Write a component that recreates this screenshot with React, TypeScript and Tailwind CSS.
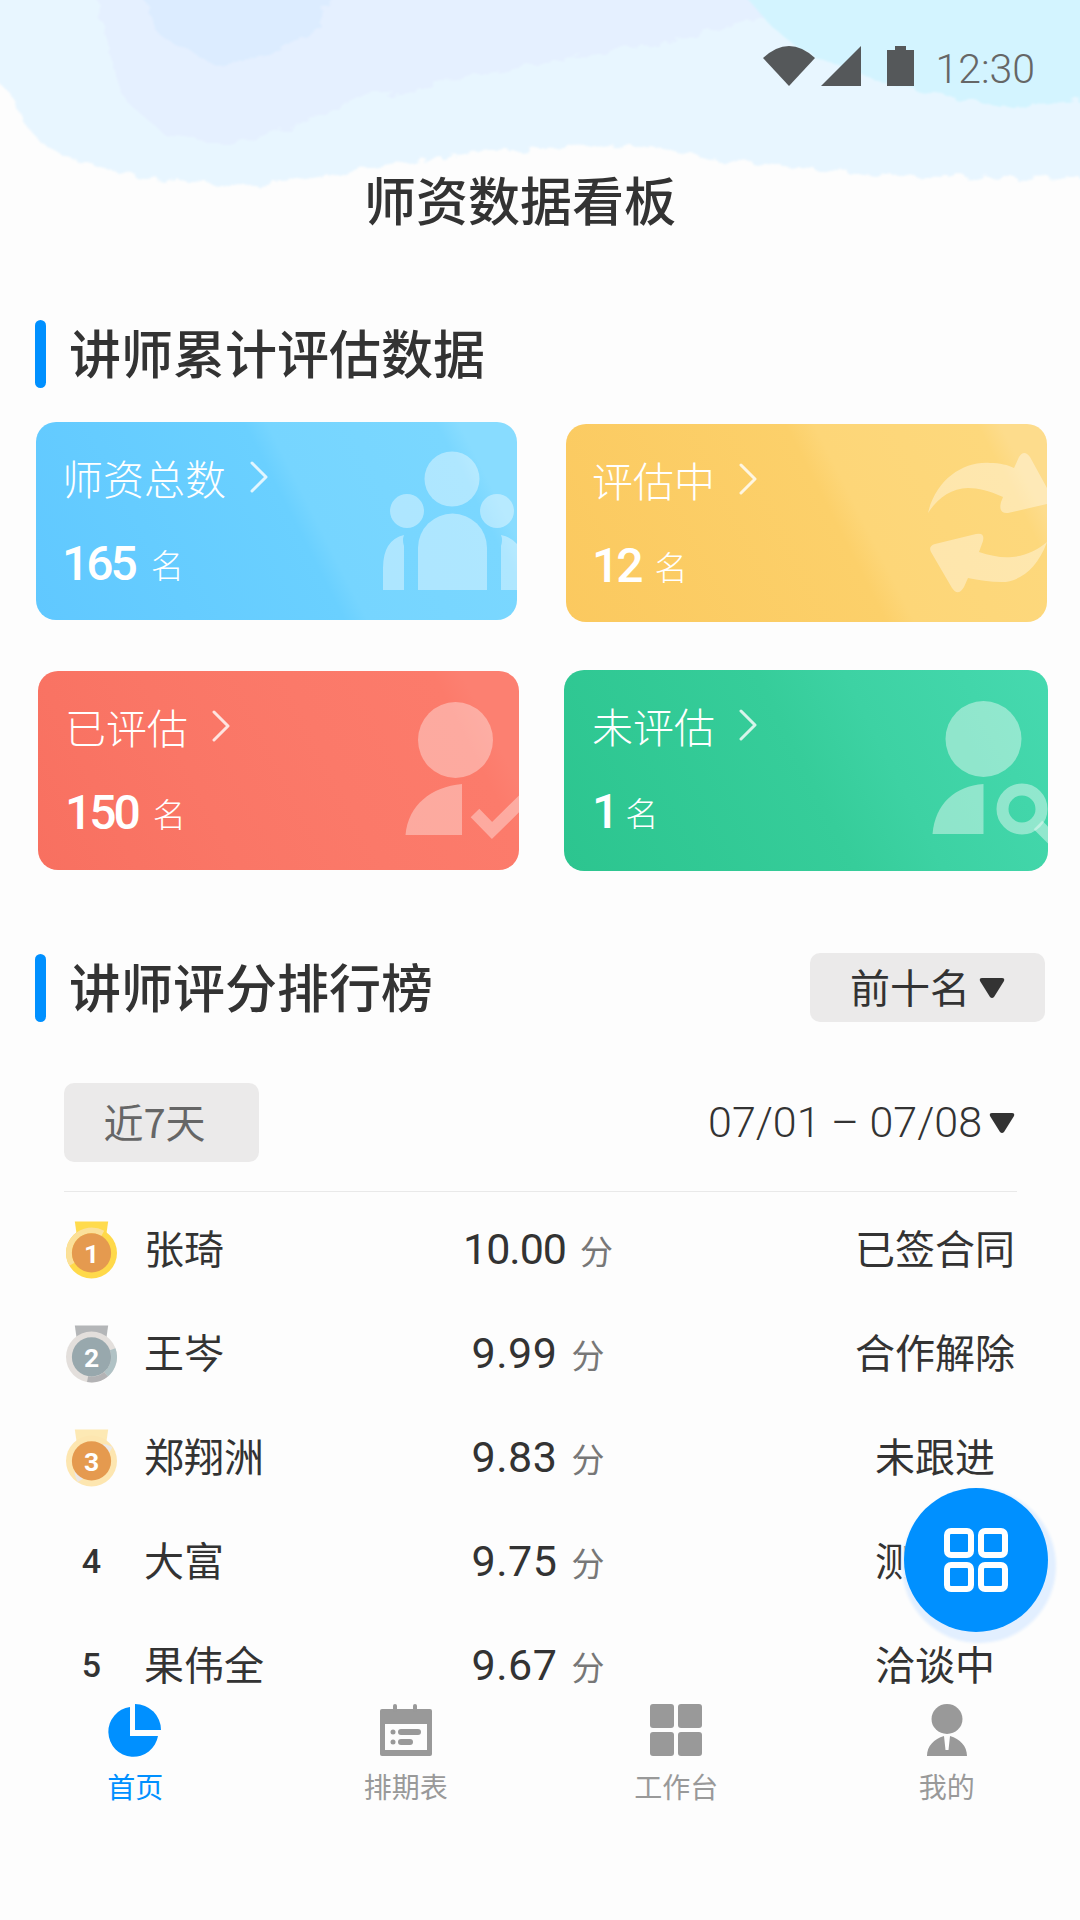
import React from "react";

const cjk = "font-['Noto_Sans_CJK_SC',sans-serif]";
const num = "font-['Roboto','Noto_Sans_CJK_SC',sans-serif]";

const Chevron = ({ className }: { className: string }) => (
  <svg width="18" height="32" viewBox="0 0 18 32" className={className}>
    <polyline points="2,2 16,16 2,30" fill="none" stroke="#ffffff" strokeOpacity="0.8" strokeWidth="3" strokeLinecap="round" strokeLinejoin="round" />
  </svg>
);

const Caret = ({ className }: { className: string }) => (
  <svg width="26" height="22" viewBox="0 0 26 22" className={className}>
    <path d="M3 1 H23 Q26 1 25 4 L15 20 Q13 22 11 20 L1 4 Q0 1 3 1 Z" fill="#333333" />
  </svg>
);

const PeopleArt = () => (
  <svg viewBox="0 0 481 198" className="absolute inset-0 h-full w-full" fill="#ffffff" fillOpacity="0.4">
    <circle cx="416" cy="57" r="27.5" />
    <circle cx="371" cy="89" r="17" />
    <circle cx="461" cy="89" r="17" />
    <path d="M382 168 V126 A34 34 0 0 1 451 126 V168 Z" />
    <path d="M347 168 V146 Q347 118 368 113 Q366 118 368 124 V168 Z" />
    <path d="M465 113 Q475 115 481 122 V168 H465 V124 Q467 118 465 113 Z" />
  </svg>
);

const CycleArt = () => (
  <svg viewBox="0 0 481 198" className="absolute inset-0 h-full w-full" fill="#ffffff" fillOpacity="0.38">
    <path d="M362 89 C370 55 398 37 424 39 C434 39 442 41 448 44 L453 33 Q458 25 464 33 L481 64 V80 L442 89 Q432 90 435 78 L437 73 C424 67 412 64 402 64 C385 64 371 75 362 89 Z" />
    <path d="M481 118 C471 146 452 158 436 158 C424 158 412 156 402 154 L398 163 Q392 173 386 164 L365 128 Q362 122 369 120 L410 110 Q419 108 417 117 L413 128 C425 132 436 134 446 133 C459 132 472 126 481 118 Z" />
  </svg>
);

const CheckArt = () => (
  <svg viewBox="0 0 481 199" className="absolute inset-0 h-full w-full" fill="#ffffff" fillOpacity="0.36">
    <ellipse cx="417.5" cy="69" rx="37.5" ry="38" />
    <path d="M367.5 164 C370 134 393 116 424 113 V164 Z" />
    <polyline points="437,142 454,159.5 486,128" fill="none" stroke="#ffffff" strokeOpacity="0.36" strokeWidth="12" />
  </svg>
);

const SearchArt = () => (
  <svg viewBox="0 0 484 201" className="absolute inset-0 h-full w-full" fill="#ffffff" fillOpacity="0.42">
    <circle cx="419.5" cy="69" r="38" />
    <path d="M368.5 164 C371 134 391 116 419.5 114 V164 Z" />
    <circle cx="458" cy="139" r="19.5" fill="none" stroke="#ffffff" strokeOpacity="0.42" strokeWidth="12" />
    <line x1="474" y1="155" x2="490" y2="171" stroke="#ffffff" strokeOpacity="0.42" strokeWidth="12" />
  </svg>
);

const StatCard = ({
  title,
  value,
  art,
  className,
  gap,
}: {
  title: string;
  value: string;
  art: React.ReactNode;
  className: string;
  gap: string;
}) => (
  <div className={`relative shrink-0 overflow-hidden rounded-[20px] text-white ${className}`}>
    {art}
    <div className={`relative mt-[33px] flex items-center text-[41px] leading-[44px] font-light ${cjk}`}>
      <span>{title}</span>
      <Chevron className="ml-[24px]" />
    </div>
    <div className={`relative mt-[40px] flex items-baseline ${gap}`}>
      <span className={`text-[48px] leading-[50px] font-medium tracking-[-3px] ${num}`}>{value}</span>
      <span className={`-translate-y-[2px] text-[33px] leading-[50px] font-light ${cjk}`}>名</span>
    </div>
  </div>
);

const SectionTitle = ({ children }: { children: React.ReactNode }) => (
  <div className="flex items-center">
    <div className="h-[68px] w-[11px] rounded-full bg-[#0090ff]" />
    <h2 className={`ml-[23px] pb-[4px] text-[52px] leading-[64px] font-medium text-[#333333] ${cjk}`}>{children}</h2>
  </div>
);

const Medal = ({ rank }: { rank: number }) => {
  const ribbon = rank === 1 ? "#ffdb4d" : rank === 2 ? "#b4b6b8" : "#fde9b4";
  const inner = rank === 2 ? "#98a8ad" : "#e59a4f";
  return (
    <svg width="52" height="58" viewBox="0 0 52 58">
      <polygon points="9,0 43,0 41,14 11,14" fill={ribbon} />
      {rank === 1 && (
        <>
          <circle cx="26" cy="32" r="26" fill="#ffd94a" />
          <path d="M6.1 43.5 A23 23 0 0 1 37.5 12.1" fill="none" stroke="#fbe09a" strokeWidth="6" />
        </>
      )}
      {rank === 2 && (
        <>
          <circle cx="26" cy="32" r="26" fill="#e3dfdc" />
          <path d="M47.6 24.1 A23 23 0 0 1 40.8 49.6" fill="none" stroke="#b0c2c5" strokeWidth="6" />
          <path d="M40.8 49.6 A23 23 0 0 1 22 54.6" fill="none" stroke="#b3b3b5" strokeWidth="6" />
        </>
      )}
      {rank === 3 && (
        <>
          <circle cx="26" cy="32" r="26" fill="#fde6b0" />
          <path d="M14.5 51.9 A23 23 0 0 1 45.9 20.5" fill="none" stroke="#ebe8e6" strokeWidth="6" />
        </>
      )}
      <circle cx="26" cy="32" r="20" fill={inner} />
      <text x="26" y="42" textAnchor="middle" fontSize="27" fontWeight="700" fill="#ffffff" fontFamily="Roboto, sans-serif">
        {rank}
      </text>
    </svg>
  );
};

const rows = [
  { name: "张琦", score: "10.00", status: "已签合同" },
  { name: "王岑", score: "9.99", status: "合作解除" },
  { name: "郑翔洲", score: "9.83", status: "未跟进" },
  { name: "大富", score: "9.75", status: "测试中" },
  { name: "果伟全", score: "9.67", status: "洽谈中" },
];

const Row = ({ rank, name, score, status }: { rank: number; name: string; score: string; status: string }) => (
  <div className={`grid h-[104px] grid-cols-[80px_244px_300px_1fr] items-center text-[#333333] ${cjk}`}>
    <div className="mt-[5px] flex justify-center pl-[2px] pr-[27px]">
      {rank <= 3 ? (
        <Medal rank={rank} />
      ) : (
        <span className={`text-[34px] font-medium text-[#333333] ${num}`}>{rank}</span>
      )}
    </div>
    <span className="text-[40px] leading-[52px]">{name}</span>
    <div className="mt-[4px] flex items-baseline justify-center">
      <span className={`text-[43px] leading-[52px] ${score === "10.00" ? "tracking-[-1px]" : "tracking-[0.5px]"} ${num}`}>{score}</span>
      <span className="ml-[14px] text-[33px] text-[#777777]">分</span>
    </div>
    <span className="ml-auto mr-[2px] w-[160px] whitespace-nowrap text-center text-[40px] leading-[52px]">{status}</span>
  </div>
);

const navItemClass = "flex flex-col items-center";

const PieIcon = () => (
  <svg width="54" height="53" viewBox="0 0 54 53" fill="#0090ff">
    <path d="M22 3 A25 25 0 1 0 50 32 H22 Z" />
    <path d="M27 0 A26 26 0 0 1 53 26 H27 Z" />
  </svg>
);

const CalendarIcon = () => (
  <svg width="54" height="53" viewBox="0 0 54 53" fill="#999999">
    <rect x="1" y="5" width="52" height="47" rx="2" />
    <rect x="14" y="0" width="4" height="8" rx="2" />
    <rect x="34" y="0" width="4" height="8" rx="2" />
    <rect x="6" y="20" width="42" height="26" fill="#fdfdfd" />
    <circle cx="14" cy="28" r="2.5" />
    <rect x="19" y="25" width="23" height="6" rx="3" />
    <circle cx="14" cy="38" r="2.5" />
    <rect x="19" y="35" width="15" height="6" rx="3" />
  </svg>
);

const GridIcon = () => (
  <svg width="54" height="53" viewBox="0 0 54 53" fill="#999999">
    <rect x="1" y="0" width="24" height="24" rx="3" />
    <rect x="29" y="0" width="24" height="24" rx="3" />
    <rect x="1" y="28" width="24" height="24" rx="3" />
    <rect x="29" y="28" width="24" height="24" rx="3" />
  </svg>
);

const UserIcon = () => (
  <svg width="54" height="53" viewBox="0 0 54 53" fill="#999999">
    <ellipse cx="27" cy="15" rx="15.5" ry="15" />
    <path d="M7 52 C7 42 14 35 24 32 L25.5 46 H28.5 L30 32 C40 35 47 42 47 52 Z" />
  </svg>
);

export default function App() {
  return (
    <div className="relative h-[1920px] w-[1080px] overflow-hidden bg-[#fdfdfd]">
      {/* watercolour header */}
      <svg viewBox="0 0 1080 200" className="absolute left-0 top-0 h-[200px] w-[1080px]">
        <defs>
          <filter id="wash" x="-5%" y="-5%" width="110%" height="110%">
            <feTurbulence type="fractalNoise" baseFrequency="0.06 0.09" numOctaves="3" seed="4" />
            <feDisplacementMap in="SourceGraphic" scale="14" />
            <feGaussianBlur stdDeviation="1" />
          </filter>
        </defs>
        <g filter="url(#wash)">
          <path
            d="M-10 -10 L-10 75 L12 95 L22 120 L40 142 L62 155 L90 165 L140 178 L190 182 L250 186 L300 180 L350 172 L420 160 L480 152 L560 147 L640 146 L700 156 L800 168 L900 176 L1000 178 L1090 177 V-10 Z"
            fill="#e8f6ff"
          />
          <path d="M95 -10 L110 60 L125 100 L165 135 L230 145 L300 125 L365 95 L420 90 L470 75 L560 60 L680 40 L770 15 L740 -10 Z" fill="#e5f0ff" />
          <path d="M140 -10 L160 35 L215 65 L270 55 L320 25 L335 -10 Z" fill="#dcecff" />
          <path d="M740 -10 L770 25 L800 50 L880 82 L1000 107 L1090 100 V-10 Z" fill="#d3f4ff" />
        </g>
      </svg>

      <div className="relative flex h-full flex-col">
        {/* status bar */}
        <div className="mt-[46px] flex h-[40px] items-center justify-end pr-[45px]">
          <svg width="98" height="40" viewBox="0 0 98 40" fill="#55585a">
            <path d="M26 40 L0 12 Q26 -12 52 12 Z" />
            <path d="M98 0 V40 H58 Z" />
          </svg>
          <svg width="27" height="40" viewBox="0 0 27 40" fill="#55585a" className="ml-[26px]">
            <path d="M8 0 H19 V4 H27 V40 H0 V4 H8 Z" />
          </svg>
          <span className={`ml-[21px] pt-[6px] text-[41px] leading-[40px] font-light text-[#666666] ${num}`}>12:30</span>
        </div>

        <h1 className={`mt-[85px] h-[56px] pr-[40px] text-center text-[52px] leading-[56px] font-medium text-[#333333] ${cjk}`}>
          师资数据看板
        </h1>

        <div className="mt-[93px] pl-[35px]">
          <SectionTitle>讲师累计评估数据</SectionTitle>
        </div>

        <div className="mt-[34px] flex items-start">
          <StatCard
            title="师资总数"
            value="165"
            art={<PeopleArt />}
            gap="gap-[16px]"
            className="ml-[36px] h-[198px] w-[481px] pl-[26px] bg-[linear-gradient(63deg,#60c8ff_0%,#6ad0ff_53%,#76d5ff_57%,#7ad7ff_86%,#88dcff_90%)]"
          />
          <StatCard
            title="评估中"
            value="12"
            art={<CycleArt />}
            gap="gap-[14px]"
            className="ml-[49px] mt-[2px] h-[198px] w-[481px] pl-[26px] bg-[linear-gradient(63deg,#fbc95f_0%,#fcd06a_55%,#fdd678_60%,#fdd87c_88%,#fddc8c_92%)]"
          />
        </div>
        <div className="mt-[48px] flex items-start">
          <StatCard
            title="已评估"
            value="150"
            art={<CheckArt />}
            gap="gap-[15px]"
            className="ml-[38px] mt-[1px] h-[199px] w-[481px] pl-[27px] bg-[linear-gradient(63deg,#f87060_0%,#fa7666_35%,#fb7969_60%,#fc7b6b_85%,#fc8071_90%)]"
          />
          <StatCard
            title="未评估"
            value="1"
            art={<SearchArt />}
            gap="gap-[9px]"
            className="ml-[45px] h-[201px] w-[484px] pl-[28px] bg-[linear-gradient(63deg,#2cc58f_0%,#36cd9a_50%,#3dd2a3_65%,#42d6aa_85%,#46d9af_100%)]"
          />
        </div>

        <div className="mt-[82px] flex items-center pl-[35px] pr-[35px]">
          <SectionTitle>讲师评分排行榜</SectionTitle>
          <div className={`ml-auto flex h-[69px] w-[235px] items-center rounded-[10px] bg-[#ebeaea] pl-[40px] text-[40px] text-[#333333] ${cjk}`}>
            <span className="pb-[4px]">前十名</span>
            <Caret className="ml-[9px]" />
          </div>
        </div>

        <div className="ml-[64px] mr-[63px] mt-[61px] flex items-center justify-between">
          <div className={`flex h-[79px] w-[195px] items-center justify-center rounded-[10px] bg-[#ebeaea] pb-[4px] pr-[14px] text-[40px] text-[#666666] ${cjk}`}>
            近7天
          </div>
          <div className={`flex items-center text-[43px] font-light text-[#333333] ${num}`}>
            <span>07/01 – 07/08</span>
            <Caret className="ml-[7px] mr-[2px]" />
          </div>
        </div>

        <div className="ml-[64px] mr-[63px] mt-[29px] h-[1px] bg-[#e9e9e9]" />

        <div className="ml-[64px] mr-[63px] mt-[3px]">
          {rows.map((row, i) => (
            <Row key={row.name} rank={i + 1} {...row} />
          ))}
        </div>

        <nav className={`absolute left-0 top-[1704px] grid w-[1082px] grid-cols-4 ${cjk}`}>
          <div className={navItemClass}>
            <PieIcon />
            <span className="mt-[10px] text-[28px] leading-[38px] text-[#0090ff]">首页</span>
          </div>
          <div className={navItemClass}>
            <CalendarIcon />
            <span className="mt-[10px] text-[28px] leading-[38px] text-[#999999]">排期表</span>
          </div>
          <div className={navItemClass}>
            <GridIcon />
            <span className="mt-[10px] text-[28px] leading-[38px] text-[#999999]">工作台</span>
          </div>
          <div className={navItemClass}>
            <UserIcon />
            <span className="mt-[10px] text-[28px] leading-[38px] text-[#999999]">我的</span>
          </div>
        </nav>

        {/* floating button */}
        <div className="absolute left-[904px] top-[1488px] flex h-[144px] w-[144px] items-center justify-center rounded-full bg-[#0090ff] shadow-[3px_6px_3px_5px_#e2efff]">
          <svg width="64" height="64" viewBox="0 0 64 64" fill="none" stroke="#ffffff" strokeWidth="6">
            <rect x="3" y="3" width="24" height="24" rx="4" />
            <rect x="37" y="3" width="24" height="24" rx="4" />
            <rect x="3" y="37" width="24" height="24" rx="4" />
            <rect x="37" y="37" width="24" height="24" rx="4" />
          </svg>
        </div>
      </div>
    </div>
  );
}
